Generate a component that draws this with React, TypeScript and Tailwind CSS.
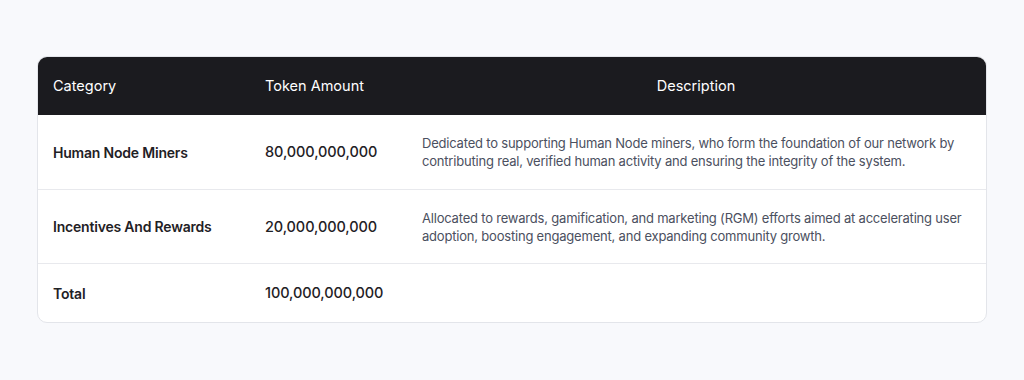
const rows = [
  {
    category: "Human Node Miners",
    amount: "80,000,000,000",
    description:
      "Dedicated to supporting Human Node miners, who form the foundation of our network by contributing real, verified human activity and ensuring the integrity of the system.",
  },
  {
    category: "Incentives And Rewards",
    amount: "20,000,000,000",
    description:
      "Allocated to rewards, gamification, and marketing (RGM) efforts aimed at accelerating user adoption, boosting engagement, and expanding community growth.",
  },
];

export default function App() {
  return (
    <div className="min-h-[380px] w-full bg-[#f8f9fc] pt-[56px] pl-[37px] font-['Inter',sans-serif]">
      <div className="w-[950px] overflow-hidden rounded-[10px] border border-[#e3e5ea] bg-white">
        <table className="w-full table-fixed border-collapse text-left">
          <colgroup>
            <col className="w-[212px]" />
            <col className="w-[156px]" />
            <col />
          </colgroup>
          <thead>
            <tr className="h-[58px] bg-[#1b1b1f] text-[14.5px] font-normal text-white">
              <th className="pl-[15px] pr-4 font-normal">Category</th>
              <th className="pl-[15px] pr-4 font-normal">Token Amount</th>
              <th className="px-4 text-center font-normal">Description</th>
            </tr>
          </thead>
          <tbody>
            {rows.map((r) => (
              <tr key={r.category} className="h-[74px] border-b border-[#e8e9ed]">
                <td className="pl-[15px] pr-4 pt-px text-[14px] font-semibold tracking-[-0.2px] text-[#1f2125]">{r.category}</td>
                <td className="pl-[15px] pr-4 pt-px text-[14.5px] font-medium tracking-[-0.1px] text-[#1f2125]">{r.amount}</td>
                <td className="pl-4 pr-4 pt-px text-[13px] leading-[18px] tracking-[-0.2px] text-[#4b5060]">
                  {r.description}
                </td>
              </tr>
            ))}
            <tr className="h-[59px]">
              <td className="pl-[15px] pr-4 pt-px text-[14px] font-semibold tracking-[-0.2px] text-[#1f2125]">Total</td>
              <td className="pl-[15px] pr-4 pt-px text-[14.5px] font-medium tracking-[-0.1px] text-[#1f2125]">100,000,000,000</td>
              <td className="px-4" />
            </tr>
          </tbody>
        </table>
      </div>
    </div>
  );
}
